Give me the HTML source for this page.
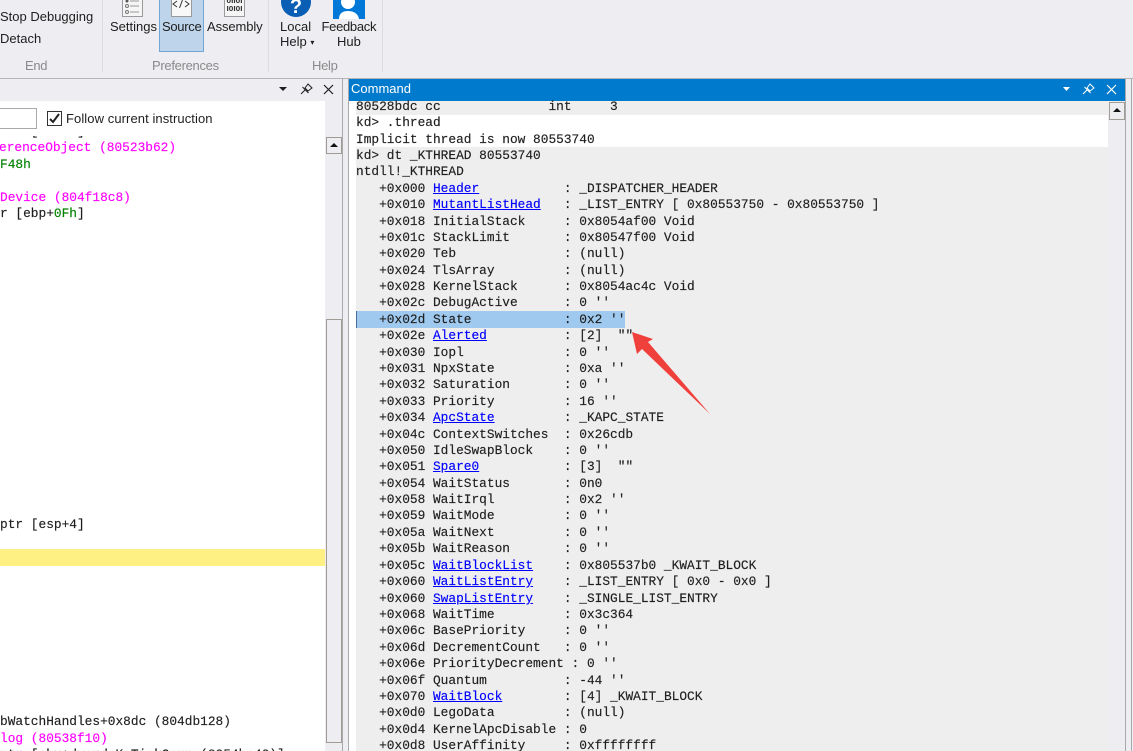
<!DOCTYPE html>
<html><head><meta charset="utf-8"><style>
html,body{margin:0;padding:0;width:1133px;height:751px;overflow:hidden;background:#eeeef2}
.a{position:absolute}
.u{position:absolute;font:13px/16px "Liberation Sans",sans-serif;color:#1e1e1e;white-space:nowrap;text-align:center}
.g{color:#8a8a8a;letter-spacing:-.3px}
.m{position:absolute;font:12.83px/16px "Liberation Mono",monospace;color:#1e1e1e;white-space:pre;-webkit-text-stroke:.15px}
.m a{color:#0000ff;text-decoration:underline}
.p{color:#ff00ff}.n{color:#008000}
</style></head><body>
<div id="r" style="position:relative;width:1133px;height:751px;overflow:hidden">

<div class="u" style="left:0;top:9px">Stop Debugging</div>
<div class="u" style="left:0;top:31px">Detach</div>
<div class="u g" style="left:25px;top:58px">End</div>
<div class="a" style="left:102px;top:0;width:1px;height:72px;background:#dcdce0"></div>

<svg class="a" style="left:120px;top:0" width="24" height="18"><rect x="2.5" y="-3" width="20" height="19.5" fill="#f5f5f5" stroke="#9a9a9a"/><circle cx="7" cy="1" r="1.500" fill="#555"/><circle cx="7" cy="6" r="1.500" fill="none" stroke="#777"/><circle cx="7" cy="12" r="1.500" fill="none" stroke="#777"/><path d="M10 6h9M10 12h9M10 1h9" stroke="#999"/></svg>
<div class="u" style="left:110px;top:19px">Settings</div>
<div class="a" style="left:159px;top:-2px;width:43px;height:52px;background:#bdd4ea;border:1px solid #6fa6d6"></div>
<svg class="a" style="left:171px;top:0" width="22" height="18"><rect x="0.5" y="-3" width="20" height="19.5" fill="#f8f8f8" stroke="#9a9a9a"/><path d="M6 1L2 4l4 3M14 1l4 3-4 3M11.500 0L8.500 8" stroke="#333" fill="none"/></svg>
<div class="u" style="left:162px;top:19px;letter-spacing:-.3px">Source</div>
<svg class="a" style="left:224px;top:0" width="22" height="18"><rect x="0.5" y="-3" width="20" height="19.500" fill="#f5f5f5" stroke="#9a9a9a"/><text x="2.500" y="3" font-family="Liberation Sans" font-weight="bold" font-size="7" fill="#333" textLength="16" lengthAdjust="spacingAndGlyphs">0II0I</text><text x="2.500" y="11" font-family="Liberation Sans" font-weight="bold" font-size="7" fill="#333" textLength="16" lengthAdjust="spacingAndGlyphs">I0I0I</text></svg>
<div class="u" style="left:207px;top:19px;letter-spacing:-.1px">Assembly</div>
<div class="a" style="left:268px;top:0;width:1px;height:72px;background:#dcdce0"></div>

<svg class="a" style="left:280px;top:0" width="32" height="18"><circle cx="16" cy="2" r="15" fill="#0a5fb4"/><text x="16" y="13" text-anchor="middle" font-family="Liberation Sans" font-weight="bold" font-size="20" fill="#fff">?</text></svg>
<div class="u" style="left:280px;top:19px">Local</div>
<div class="u" style="left:280px;top:34px">Help <span style="font-size:8px;vertical-align:1px">▾</span></div>
<svg class="a" style="left:333px;top:0" width="32" height="19"><rect width="32" height="19" fill="#0078d7"/><circle cx="15" cy="2" r="7" fill="#fff"/><path d="M6 19c0-6 4-8 9-8s10 2 11 8z" fill="#fff"/></svg>
<div class="u" style="left:321.500px;top:19px;letter-spacing:-.3px">Feedback</div>
<div class="u" style="left:337px;top:34px">Hub</div>
<div class="u g" style="left:152px;top:58px">Preferences</div>
<div class="u g" style="left:312px;top:58px">Help</div>
<div class="a" style="left:382px;top:0;width:1px;height:72px;background:#dcdce0"></div>

<div class="a" style="left:0;top:78px;width:343px;height:1px;background:#b5b5b5"></div>
<div class="a" style="left:343px;top:78px;width:790px;height:1px;background:#b5b5b5"></div>
<div class="a" style="left:0;top:101px;width:325px;height:650px;background:#fff"></div>
<div class="a" style="left:342px;top:78px;width:1px;height:673px;background:#aaaaae"></div>
<div class="a" style="left:348px;top:78px;width:1px;height:673px;background:#aaaaae"></div>
<svg class="a" style="left:278px;top:83px" width="56" height="12"><path d="M1 4h8L5 8z" fill="#1e1e1e"/><path d="M23 11l4-4M24.500 4l6 6M27 5l3-4 4 4-4 3z" fill="none" stroke="#1e1e1e"/><path d="M46 2l9 9M55 2l-9 9" stroke="#1e1e1e" stroke-width="1.200"/></svg>

<div class="a" style="left:-5px;top:108px;width:40px;height:19px;background:#fff;border:1px solid #a8a8a8"></div>
<div class="a" style="left:47px;top:111px;width:13px;height:13px;background:#fff;border:1px solid #333"></div>
<svg class="a" style="left:47px;top:111px" width="15" height="15"><path d="M3 8l3 3 6-8" stroke="#222" stroke-width="2" fill="none"/></svg>
<div class="u" style="left:66px;top:111px;letter-spacing:.08px">Follow current instruction</div>

<div class="a" style="left:0;top:136px;width:325px;height:3px;overflow:hidden"><div class="m" style="left:0;top:-12px">    [     ]</div></div>
<div class="m p" style="left:-1px;top:140px">erenceObject (80523b62)</div>
<div class="m" style="left:0;top:157px"><span class="n">F48h</span></div>
<div class="m p" style="left:0;top:190px">Device (804f18c8)</div>
<div class="m" style="left:0;top:206px">r [ebp+<span class="n">0Fh</span>]</div>
<div class="m" style="left:0;top:517px">ptr [esp+4]</div>
<div class="a" style="left:0;top:549px;width:325px;height:17px;background:#fff084"></div>
<div class="m" style="left:0;top:714px">bWatchHandles+0x8dc (804db128)</div>
<div class="m p" style="left:0;top:731px">log (80538f10)</div>
<div class="m" style="left:0;top:747px">ptr [ebx+dword_KeTickCoun (8054bc40)]</div>

<div class="a" style="left:325px;top:101px;width:17px;height:650px;background:#eeeef2"></div>
<div class="a" style="left:326px;top:137px;width:14px;height:15px;background:#eeeef2;border:1px solid #a09c94"></div>
<svg class="a" style="left:327px;top:140px" width="14" height="10"><path d="M3 7h8L7 3z" fill="#111"/></svg>
<div class="a" style="left:326px;top:319px;width:14px;height:422px;background:#eeeef2;border:1px solid #a09c94"></div>

<div class="a" style="left:349px;top:79px;width:776px;height:22px;background:#007acc"></div>
<div class="u" style="left:351px;top:81px;color:#fff">Command</div>
<svg class="a" style="left:1061px;top:83px" width="58" height="12"><path d="M2 4h7L5.500 8z" fill="#fff"/><path d="M22 11l4-4M23.500 4l6 6M26 5l3-4 4 4-4 3z" fill="none" stroke="#fff"/><path d="M46 2l9 9M55 2l-9 9" stroke="#fff" stroke-width="1.200"/></svg>
<div class="a" style="left:349px;top:101px;width:759px;height:650px;background:#fff"></div>
<div class="a" style="left:356px;top:101px;width:752px;height:650px;background:#eeeeee"></div>
<div class="a" style="left:356px;top:115px;width:752px;height:32px;background:#fff"></div>
<div class="a" style="left:356px;top:311px;width:269px;height:17px;background:#9fc9ee"></div>
<div class="a" style="left:356px;top:311px;width:1px;height:17px;background:#4a6f96"></div>
<div class="a" style="left:1108px;top:101px;width:17px;height:650px;background:#eeeef2"></div>
<div class="a" style="left:1109px;top:102px;width:14px;height:16px;background:#eeeef2;border:1px solid #a09c94"></div>
<svg class="a" style="left:1110px;top:105px" width="14" height="10"><path d="M3 7h8L7 3z" fill="#111"/></svg>
<div class="a" style="left:1125px;top:79px;width:1px;height:672px;background:#aaaaae"></div>
<div class="a" style="left:1131px;top:79px;width:1px;height:672px;background:#aaaaae"></div>

<div class="m" style="left:356px;top:99px">80528bdc cc              int     3</div>
<div class="m" style="left:356px;top:115px">kd&gt; .thread</div>
<div class="m" style="left:356px;top:132px">Implicit thread is now 80553740</div>
<div class="m" style="left:356px;top:148px">kd&gt; dt _KTHREAD 80553740</div>
<div class="m" style="left:356px;top:164px">ntdll!_KTHREAD</div>
<div class="m" style="left:356px;top:181px">   +0x000 <a>Header</a>           : _DISPATCHER_HEADER</div>
<div class="m" style="left:356px;top:197px">   +0x010 <a>MutantListHead</a>   : _LIST_ENTRY [ 0x80553750 - 0x80553750 ]</div>
<div class="m" style="left:356px;top:214px">   +0x018 InitialStack     : 0x8054af00 Void</div>
<div class="m" style="left:356px;top:230px">   +0x01c StackLimit       : 0x80547f00 Void</div>
<div class="m" style="left:356px;top:246px">   +0x020 Teb              : (null)</div>
<div class="m" style="left:356px;top:263px">   +0x024 TlsArray         : (null)</div>
<div class="m" style="left:356px;top:279px">   +0x028 KernelStack      : 0x8054ac4c Void</div>
<div class="m" style="left:356px;top:295px">   +0x02c DebugActive      : 0 ''</div>
<div class="m" style="left:356px;top:312px">   +0x02d State            : 0x2 ''</div>
<div class="m" style="left:356px;top:328px">   +0x02e <a>Alerted</a>          : [2]  ""</div>
<div class="m" style="left:356px;top:345px">   +0x030 Iopl             : 0 ''</div>
<div class="m" style="left:356px;top:361px">   +0x031 NpxState         : 0xa ''</div>
<div class="m" style="left:356px;top:377px">   +0x032 Saturation       : 0 ''</div>
<div class="m" style="left:356px;top:394px">   +0x033 Priority         : 16 ''</div>
<div class="m" style="left:356px;top:410px">   +0x034 <a>ApcState</a>         : _KAPC_STATE</div>
<div class="m" style="left:356px;top:427px">   +0x04c ContextSwitches  : 0x26cdb</div>
<div class="m" style="left:356px;top:443px">   +0x050 IdleSwapBlock    : 0 ''</div>
<div class="m" style="left:356px;top:459px">   +0x051 <a>Spare0</a>           : [3]  ""</div>
<div class="m" style="left:356px;top:476px">   +0x054 WaitStatus       : 0n0</div>
<div class="m" style="left:356px;top:492px">   +0x058 WaitIrql         : 0x2 ''</div>
<div class="m" style="left:356px;top:508px">   +0x059 WaitMode         : 0 ''</div>
<div class="m" style="left:356px;top:525px">   +0x05a WaitNext         : 0 ''</div>
<div class="m" style="left:356px;top:541px">   +0x05b WaitReason       : 0 ''</div>
<div class="m" style="left:356px;top:558px">   +0x05c <a>WaitBlockList</a>    : 0x805537b0 _KWAIT_BLOCK</div>
<div class="m" style="left:356px;top:574px">   +0x060 <a>WaitListEntry</a>    : _LIST_ENTRY [ 0x0 - 0x0 ]</div>
<div class="m" style="left:356px;top:591px">   +0x060 <a>SwapListEntry</a>    : _SINGLE_LIST_ENTRY</div>
<div class="m" style="left:356px;top:607px">   +0x068 WaitTime         : 0x3c364</div>
<div class="m" style="left:356px;top:623px">   +0x06c BasePriority     : 0 ''</div>
<div class="m" style="left:356px;top:640px">   +0x06d DecrementCount   : 0 ''</div>
<div class="m" style="left:356px;top:656px">   +0x06e PriorityDecrement : 0 ''</div>
<div class="m" style="left:356px;top:673px">   +0x06f Quantum          : -44 ''</div>
<div class="m" style="left:356px;top:689px">   +0x070 <a>WaitBlock</a>        : [4] _KWAIT_BLOCK</div>
<div class="m" style="left:356px;top:705px">   +0x0d0 LegoData         : (null)</div>
<div class="m" style="left:356px;top:722px">   +0x0d4 KernelApcDisable : 0</div>
<div class="m" style="left:356px;top:738px">   +0x0d8 UserAffinity     : 0xffffffff</div>

<svg class="a" style="left:0;top:0;pointer-events:none" width="1133" height="751"><path d="M632 332L653 339 648 342 710 414 642 349 637 354z" fill="#f0403c"/></svg>
</div>
</body></html>
